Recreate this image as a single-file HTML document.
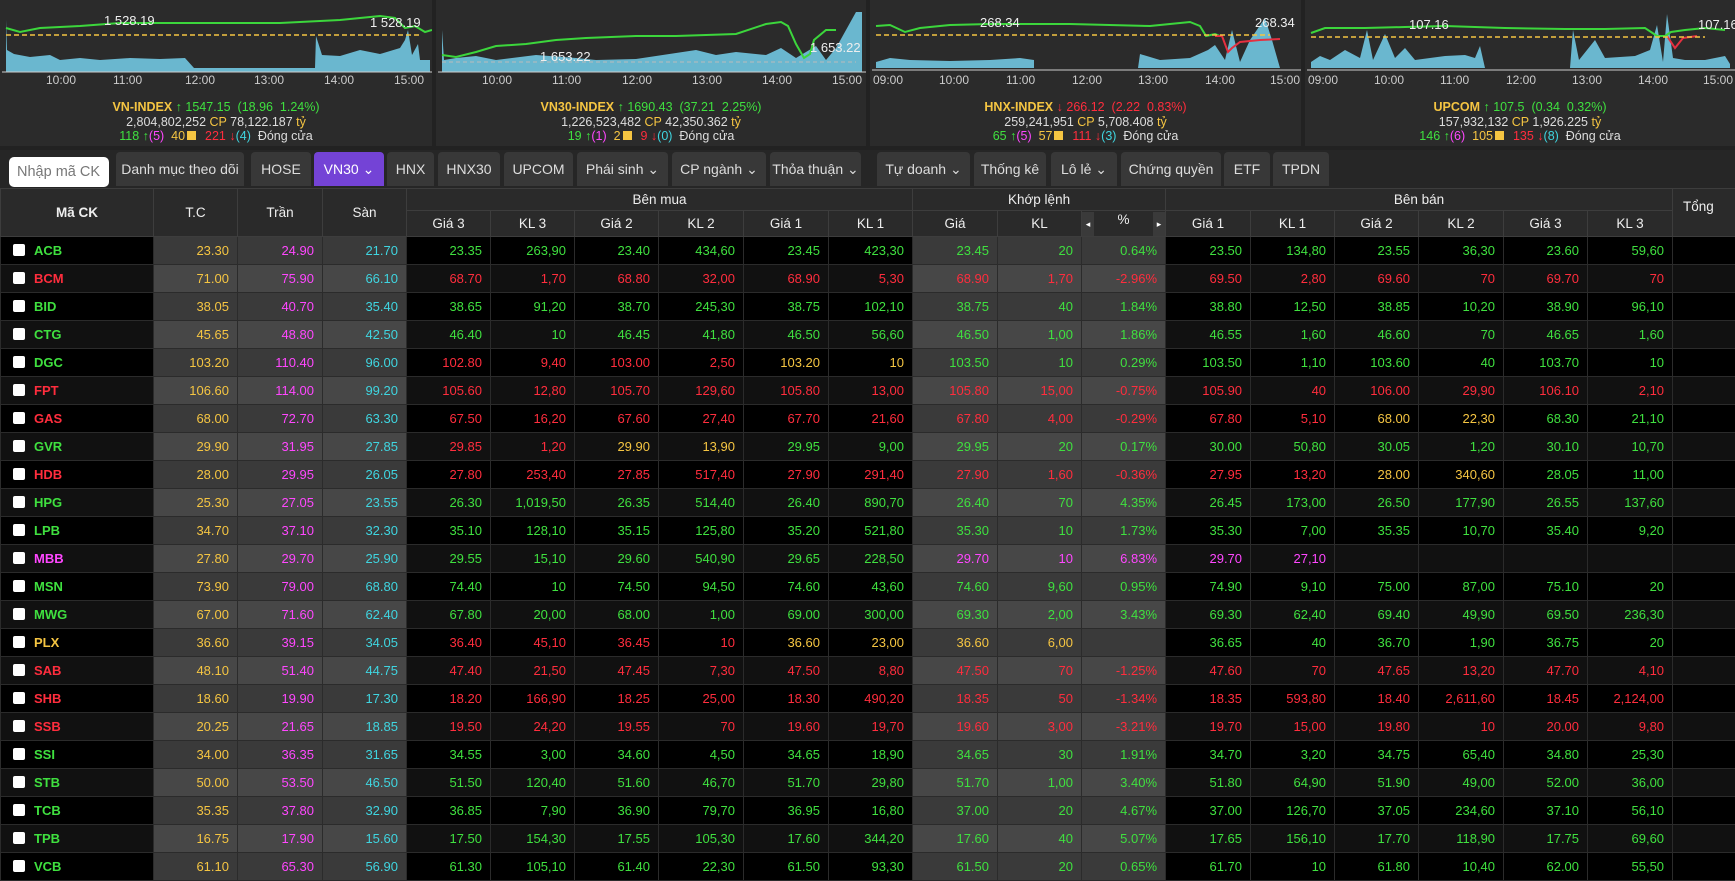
<!DOCTYPE html>
<html><head><meta charset="utf-8"><style>
*{box-sizing:border-box;margin:0;padding:0}
body{width:1735px;height:871px;overflow:hidden;background:#222;font-family:"Liberation Sans","Noto Sans CJK SC",sans-serif;color:#ddd;font-size:13px;position:relative}
.panel{position:absolute;top:0;height:146px;background:#2b2b2b}
.panel svg{position:absolute;left:0;top:0}
.info{position:absolute;top:100px;left:0;right:0;text-align:center;font-size:12.5px;line-height:14.5px;color:#ddd}
.g{color:#3fe03f}.r{color:#ff2d3d}.y{color:#f5c542}.p{color:#ff47ff}.c{color:#3fd5e0}.w{color:#e6e6e6}
.sq{display:inline-block;width:9px;height:9px;background:#f5c542;margin:0 2px}
.tb{position:absolute;top:150px;left:0;width:1735px;height:38px;background:#262626}
.btn{position:absolute;top:2px;height:34px;background:#383838;border-radius:4px 4px 0 0;color:#ddd;font-size:14px;line-height:34px;text-align:center}
.btn.act{background:#7443d6;color:#fff}
.inp{position:absolute;top:7px;left:9px;width:100px;height:30px;background:#fff;border-radius:5px;color:#777;font-size:14.5px;line-height:30px;padding-left:8px}
table{position:absolute;top:188px;left:0;border-collapse:collapse;table-layout:fixed;width:1800px}
th{background:#2a2a2a;color:#eee;font-weight:normal;font-size:13.5px;border:1px solid #3d3d3d;height:22px}
tr.h2 th{height:26px}
td{height:28px;text-align:right;padding-right:8px;border:1px solid #2b2b2b;font-size:13px}
tbody tr:nth-child(odd) td{background:#000}
tbody tr:nth-child(even) td{background:#111}
tbody tr:nth-child(odd) td.m{background:#3a3a3a}
tbody tr:nth-child(even) td.m{background:#474747}
td.s{text-align:left;padding-left:12px;font-weight:bold}
td.s i{display:inline-block;width:12px;height:12px;background:#fff;border-radius:2px;vertical-align:-1px;margin-right:9px}
.arr{display:inline-block;width:12px;height:24px;background:#3a3a3a;color:#fff;font-size:9px;line-height:24px;vertical-align:middle}
</style></head><body>

<div class="panel" style="left:0;width:432px">
<svg width="432" height="95">
<polygon fill="#6ab7cf" points="6,20 7,50 14,54 30,57 50,55 60,60 80,58 100,60 130,58 160,59 185,58 194,68 315,68 316,36 322,55 340,56 360,50 380,54 400,48 405,40 408,30 412,55 418,44 420,60 430,60 430,72 6,72"/>
<polyline fill="none" stroke="#3cd63c" stroke-width="2" points="6,28 20,32 40,28 80,26 120,23 200,23 280,23 340,20 380,16 395,18 405,28 415,26 425,32 432,30"/>
<line x1="6" y1="35" x2="420" y2="35" stroke="#f5c542" stroke-dasharray="5,3" stroke-width="1.5"/>
<line x1="2" y1="72" x2="432" y2="72" stroke="#ccc"/>
<text x="104" y="25" fill="#eee" font-size="13" font-family="Liberation Sans">1 528.19</text>
<text x="370" y="27" fill="#eee" font-size="13" font-family="Liberation Sans">1 528.19</text>
<g fill="#ccc" font-size="12" font-family="Liberation Sans"><text x="46" y="84">10:00</text><text x="113" y="84">11:00</text><text x="185" y="84">12:00</text><text x="254" y="84">13:00</text><text x="324" y="84">14:00</text><text x="394" y="84">15:00</text></g>
</svg>
<div class="info"><span class="y"><b>VN-INDEX</b></span> <span class="g">↑ 1547.15 &nbsp;(18.96 &nbsp;1.24%)</span><br>2,804,802,252 <span class="y">CP</span> 78,122.187 <span class="y">tỷ</span><br><span class="g">118 ↑</span><span class="p">(5)</span> &nbsp;<span class="y">40</span><span class="sq"></span> &nbsp;<span class="r">221 ↓</span><span class="c">(4)</span> &nbsp;Đóng cửa</div>
</div>

<div class="panel" style="left:436px;width:430px">
<svg width="430" height="95">
<polygon fill="#6ab7cf" points="6,30 8,60 20,58 40,56 60,60 100,55 140,58 160,60 200,59 220,56 260,50 280,55 300,52 330,55 345,48 360,58 380,46 390,60 400,48 420,12 426,12 426,72 6,72"/>
<polyline fill="none" stroke="#3cd63c" stroke-width="2" points="6,55 20,57 40,52 60,46 90,44 120,40 150,38 200,36 240,36 300,34 330,24 345,22 352,26 360,44 368,58 374,54 378,40 390,30 400,30"/>
<line x1="6" y1="62" x2="420" y2="62" stroke="#bbb" stroke-dasharray="4,3"/>
<line x1="2" y1="72" x2="430" y2="72" stroke="#ccc"/>
<text x="104" y="61" fill="#eee" font-size="13" font-family="Liberation Sans">1 653.22</text>
<text x="374" y="52" fill="#eee" font-size="13" font-family="Liberation Sans">1 653.22</text>
<g fill="#ccc" font-size="12" font-family="Liberation Sans"><text x="46" y="84">10:00</text><text x="116" y="84">11:00</text><text x="186" y="84">12:00</text><text x="256" y="84">13:00</text><text x="326" y="84">14:00</text><text x="396" y="84">15:00</text></g>
</svg>
<div class="info"><span class="y"><b>VN30-INDEX</b></span> <span class="g">↑ 1690.43 &nbsp;(37.21 &nbsp;2.25%)</span><br>1,226,523,482 <span class="y">CP</span> 42,350.362 <span class="y">tỷ</span><br><span class="g">19 ↑</span><span class="p">(1)</span> &nbsp;<span class="y">2</span><span class="sq"></span> &nbsp;<span class="r">9 ↓</span><span class="c">(0)</span> &nbsp;Đóng cửa</div>
</div>

<div class="panel" style="left:870px;width:431px">
<svg width="431" height="95">
<polygon fill="#6ab7cf" points="6,62 20,58 40,60 80,61 120,60 150,58 164,60 164,68 268,68 270,54 290,60 320,58 338,50 345,45 355,60 362,30 370,62 380,40 395,18 402,40 410,68 6,68"/>
<polyline fill="none" stroke="#3cd63c" stroke-width="2" points="6,26 20,25 35,32 50,28 80,25 120,24 200,24 280,26 300,24 320,22 330,26 336,36 345,34 350,36"/>
<polyline fill="none" stroke="#e53040" stroke-width="2" points="345,36 352,36 358,52 362,48 370,42 390,40 410,39"/>
<line x1="6" y1="35" x2="400" y2="35" stroke="#f5c542" stroke-dasharray="5,3" stroke-width="1.5"/>
<line x1="2" y1="70" x2="431" y2="70" stroke="#ccc"/>
<text x="110" y="27" fill="#eee" font-size="13" font-family="Liberation Sans">268.34</text>
<text x="385" y="27" fill="#eee" font-size="13" font-family="Liberation Sans">268.34</text>
<g fill="#ccc" font-size="12" font-family="Liberation Sans"><text x="3" y="84">09:00</text><text x="69" y="84">10:00</text><text x="136" y="84">11:00</text><text x="202" y="84">12:00</text><text x="268" y="84">13:00</text><text x="335" y="84">14:00</text><text x="400" y="84">15:00</text></g>
</svg>
<div class="info"><span class="y"><b>HNX-INDEX</b></span> <span class="r">↓ 266.12 &nbsp;(2.22 &nbsp;0.83%)</span><br>259,241,951 <span class="y">CP</span> 5,708.408 <span class="y">tỷ</span><br><span class="g">65 ↑</span><span class="p">(5)</span> &nbsp;<span class="y">57</span><span class="sq"></span> &nbsp;<span class="r">111 ↓</span><span class="c">(3)</span> &nbsp;Đóng cửa</div>
</div>

<div class="panel" style="left:1305px;width:430px">
<svg width="430" height="95">
<polygon fill="#6ab7cf" points="6,62 15,56 25,60 40,50 55,58 62,30 68,60 80,34 90,58 100,48 110,60 140,56 160,55 170,58 175,46 180,68 265,68 268,30 274,60 290,40 300,58 330,56 345,50 352,25 358,62 362,14 368,58 380,60 400,60 420,56 425,64 425,68 6,68"/>
<polyline fill="none" stroke="#3cd63c" stroke-width="2" points="6,33 20,28 60,28 100,27 140,26 200,28 260,29 300,29 340,28 352,36 360,36 366,32 380,30 400,28 420,30"/>
<polyline fill="none" stroke="#e53040" stroke-width="2" points="362,36 370,48 378,38 392,36"/>
<line x1="6" y1="37" x2="400" y2="37" stroke="#f5c542" stroke-dasharray="5,3" stroke-width="1.5"/>
<line x1="2" y1="70" x2="430" y2="70" stroke="#ccc"/>
<text x="104" y="29" fill="#eee" font-size="13" font-family="Liberation Sans">107.16</text>
<text x="393" y="29" fill="#eee" font-size="13" font-family="Liberation Sans">107.16</text>
<g fill="#ccc" font-size="12" font-family="Liberation Sans"><text x="3" y="84">09:00</text><text x="69" y="84">10:00</text><text x="135" y="84">11:00</text><text x="201" y="84">12:00</text><text x="267" y="84">13:00</text><text x="333" y="84">14:00</text><text x="398" y="84">15:00</text></g>
</svg>
<div class="info"><span class="y"><b>UPCOM</b></span> <span class="g">↑ 107.5 &nbsp;(0.34 &nbsp;0.32%)</span><br>157,932,132 <span class="y">CP</span> 1,926.225 <span class="y">tỷ</span><br><span class="g">146 ↑</span><span class="p">(6)</span> &nbsp;<span class="y">105</span><span class="sq"></span> &nbsp;<span class="r">135 ↓</span><span class="c">(8)</span> &nbsp;Đóng cửa</div>
</div>

<div class="tb">
<div class="inp">Nhập mã CK</div>
<div class="btn" style="left:116px;width:128px">Danh mục theo dõi</div>
<div class="btn" style="left:251px;width:60px">HOSE</div>
<div class="btn act" style="left:314px;width:70px">VN30 ⌄</div>
<div class="btn" style="left:387px;width:47px">HNX</div>
<div class="btn" style="left:438px;width:62px">HNX30</div>
<div class="btn" style="left:504px;width:69px">UPCOM</div>
<div class="btn" style="left:577px;width:91px">Phái sinh ⌄</div>
<div class="btn" style="left:672px;width:94px">CP ngành ⌄</div>
<div class="btn" style="left:770px;width:91px">Thỏa thuận ⌄</div>
<div class="btn" style="left:877px;width:93px">Tự doanh ⌄</div>
<div class="btn" style="left:974px;width:72px">Thống kê</div>
<div class="btn" style="left:1051px;width:66px">Lô lẻ ⌄</div>
<div class="btn" style="left:1121px;width:100px">Chứng quyền</div>
<div class="btn" style="left:1224px;width:46px">ETF</div>
<div class="btn" style="left:1273px;width:56px">TPDN</div>
</div>

<table>
<colgroup><col style="width:153px"><col style="width:84px"><col style="width:85px"><col style="width:84px"><col style="width:84px"><col style="width:84px"><col style="width:84px"><col style="width:85px"><col style="width:85px"><col style="width:84px"><col style="width:85px"><col style="width:84px"><col style="width:84px"><col style="width:85px"><col style="width:84px"><col style="width:84px"><col style="width:85px"><col style="width:84px"><col style="width:85px"><col style="width:128px"></colgroup>
<thead>
<tr><th rowspan="2"><b>Mã CK</b></th><th rowspan="2">T.C</th><th rowspan="2">Trần</th><th rowspan="2">Sàn</th><th colspan="6">Bên mua</th><th colspan="3">Khớp lệnh</th><th colspan="6">Bên bán</th><th rowspan="2" style="text-align:left;padding-left:10px;vertical-align:top;padding-top:10px">Tổng</th></tr>
<tr class="h2"><th>Giá 3</th><th>KL 3</th><th>Giá 2</th><th>KL 2</th><th>Giá 1</th><th>KL 1</th><th>Giá</th><th>KL</th><th style="padding:0"><span class="arr" style="float:left">◂</span>%<span class="arr" style="float:right">▸</span></th><th>Giá 1</th><th>KL 1</th><th>Giá 2</th><th>KL 2</th><th>Giá 3</th><th>KL 3</th></tr>
</thead>
<tbody>
<tr><td class="s g"><i></i>ACB</td><td class="m y">23.30</td><td class="m p">24.90</td><td class="m c">21.70</td><td class="g">23.35</td><td class="g">263,90</td><td class="g">23.40</td><td class="g">434,60</td><td class="g">23.45</td><td class="g">423,30</td><td class="m g">23.45</td><td class="m g">20</td><td class="m g">0.64%</td><td class="g">23.50</td><td class="g">134,80</td><td class="g">23.55</td><td class="g">36,30</td><td class="g">23.60</td><td class="g">59,60</td><td></td></tr>
<tr><td class="s r"><i></i>BCM</td><td class="m y">71.00</td><td class="m p">75.90</td><td class="m c">66.10</td><td class="r">68.70</td><td class="r">1,70</td><td class="r">68.80</td><td class="r">32,00</td><td class="r">68.90</td><td class="r">5,30</td><td class="m r">68.90</td><td class="m r">1,70</td><td class="m r">-2.96%</td><td class="r">69.50</td><td class="r">2,80</td><td class="r">69.60</td><td class="r">70</td><td class="r">69.70</td><td class="r">70</td><td></td></tr>
<tr><td class="s g"><i></i>BID</td><td class="m y">38.05</td><td class="m p">40.70</td><td class="m c">35.40</td><td class="g">38.65</td><td class="g">91,20</td><td class="g">38.70</td><td class="g">245,30</td><td class="g">38.75</td><td class="g">102,10</td><td class="m g">38.75</td><td class="m g">40</td><td class="m g">1.84%</td><td class="g">38.80</td><td class="g">12,50</td><td class="g">38.85</td><td class="g">10,20</td><td class="g">38.90</td><td class="g">96,10</td><td></td></tr>
<tr><td class="s g"><i></i>CTG</td><td class="m y">45.65</td><td class="m p">48.80</td><td class="m c">42.50</td><td class="g">46.40</td><td class="g">10</td><td class="g">46.45</td><td class="g">41,80</td><td class="g">46.50</td><td class="g">56,60</td><td class="m g">46.50</td><td class="m g">1,00</td><td class="m g">1.86%</td><td class="g">46.55</td><td class="g">1,60</td><td class="g">46.60</td><td class="g">70</td><td class="g">46.65</td><td class="g">1,60</td><td></td></tr>
<tr><td class="s g"><i></i>DGC</td><td class="m y">103.20</td><td class="m p">110.40</td><td class="m c">96.00</td><td class="r">102.80</td><td class="r">9,40</td><td class="r">103.00</td><td class="r">2,50</td><td class="y">103.20</td><td class="y">10</td><td class="m g">103.50</td><td class="m g">10</td><td class="m g">0.29%</td><td class="g">103.50</td><td class="g">1,10</td><td class="g">103.60</td><td class="g">40</td><td class="g">103.70</td><td class="g">10</td><td></td></tr>
<tr><td class="s r"><i></i>FPT</td><td class="m y">106.60</td><td class="m p">114.00</td><td class="m c">99.20</td><td class="r">105.60</td><td class="r">12,80</td><td class="r">105.70</td><td class="r">129,60</td><td class="r">105.80</td><td class="r">13,00</td><td class="m r">105.80</td><td class="m r">15,00</td><td class="m r">-0.75%</td><td class="r">105.90</td><td class="r">40</td><td class="r">106.00</td><td class="r">29,90</td><td class="r">106.10</td><td class="r">2,10</td><td></td></tr>
<tr><td class="s r"><i></i>GAS</td><td class="m y">68.00</td><td class="m p">72.70</td><td class="m c">63.30</td><td class="r">67.50</td><td class="r">16,20</td><td class="r">67.60</td><td class="r">27,40</td><td class="r">67.70</td><td class="r">21,60</td><td class="m r">67.80</td><td class="m r">4,00</td><td class="m r">-0.29%</td><td class="r">67.80</td><td class="r">5,10</td><td class="y">68.00</td><td class="y">22,30</td><td class="g">68.30</td><td class="g">21,10</td><td></td></tr>
<tr><td class="s g"><i></i>GVR</td><td class="m y">29.90</td><td class="m p">31.95</td><td class="m c">27.85</td><td class="r">29.85</td><td class="r">1,20</td><td class="y">29.90</td><td class="y">13,90</td><td class="g">29.95</td><td class="g">9,00</td><td class="m g">29.95</td><td class="m g">20</td><td class="m g">0.17%</td><td class="g">30.00</td><td class="g">50,80</td><td class="g">30.05</td><td class="g">1,20</td><td class="g">30.10</td><td class="g">10,70</td><td></td></tr>
<tr><td class="s r"><i></i>HDB</td><td class="m y">28.00</td><td class="m p">29.95</td><td class="m c">26.05</td><td class="r">27.80</td><td class="r">253,40</td><td class="r">27.85</td><td class="r">517,40</td><td class="r">27.90</td><td class="r">291,40</td><td class="m r">27.90</td><td class="m r">1,60</td><td class="m r">-0.36%</td><td class="r">27.95</td><td class="r">13,20</td><td class="y">28.00</td><td class="y">340,60</td><td class="g">28.05</td><td class="g">11,00</td><td></td></tr>
<tr><td class="s g"><i></i>HPG</td><td class="m y">25.30</td><td class="m p">27.05</td><td class="m c">23.55</td><td class="g">26.30</td><td class="g">1,019,50</td><td class="g">26.35</td><td class="g">514,40</td><td class="g">26.40</td><td class="g">890,70</td><td class="m g">26.40</td><td class="m g">70</td><td class="m g">4.35%</td><td class="g">26.45</td><td class="g">173,00</td><td class="g">26.50</td><td class="g">177,90</td><td class="g">26.55</td><td class="g">137,60</td><td></td></tr>
<tr><td class="s g"><i></i>LPB</td><td class="m y">34.70</td><td class="m p">37.10</td><td class="m c">32.30</td><td class="g">35.10</td><td class="g">128,10</td><td class="g">35.15</td><td class="g">125,80</td><td class="g">35.20</td><td class="g">521,80</td><td class="m g">35.30</td><td class="m g">10</td><td class="m g">1.73%</td><td class="g">35.30</td><td class="g">7,00</td><td class="g">35.35</td><td class="g">10,70</td><td class="g">35.40</td><td class="g">9,20</td><td></td></tr>
<tr><td class="s p"><i></i>MBB</td><td class="m y">27.80</td><td class="m p">29.70</td><td class="m c">25.90</td><td class="g">29.55</td><td class="g">15,10</td><td class="g">29.60</td><td class="g">540,90</td><td class="g">29.65</td><td class="g">228,50</td><td class="m p">29.70</td><td class="m p">10</td><td class="m p">6.83%</td><td class="p">29.70</td><td class="p">27,10</td><td></td><td></td><td></td><td></td><td></td></tr>
<tr><td class="s g"><i></i>MSN</td><td class="m y">73.90</td><td class="m p">79.00</td><td class="m c">68.80</td><td class="g">74.40</td><td class="g">10</td><td class="g">74.50</td><td class="g">94,50</td><td class="g">74.60</td><td class="g">43,60</td><td class="m g">74.60</td><td class="m g">9,60</td><td class="m g">0.95%</td><td class="g">74.90</td><td class="g">9,10</td><td class="g">75.00</td><td class="g">87,00</td><td class="g">75.10</td><td class="g">20</td><td></td></tr>
<tr><td class="s g"><i></i>MWG</td><td class="m y">67.00</td><td class="m p">71.60</td><td class="m c">62.40</td><td class="g">67.80</td><td class="g">20,00</td><td class="g">68.00</td><td class="g">1,00</td><td class="g">69.00</td><td class="g">300,00</td><td class="m g">69.30</td><td class="m g">2,00</td><td class="m g">3.43%</td><td class="g">69.30</td><td class="g">62,40</td><td class="g">69.40</td><td class="g">49,90</td><td class="g">69.50</td><td class="g">236,30</td><td></td></tr>
<tr><td class="s y"><i></i>PLX</td><td class="m y">36.60</td><td class="m p">39.15</td><td class="m c">34.05</td><td class="r">36.40</td><td class="r">45,10</td><td class="r">36.45</td><td class="r">10</td><td class="y">36.60</td><td class="y">23,00</td><td class="m y">36.60</td><td class="m y">6,00</td><td class="m"></td><td class="g">36.65</td><td class="g">40</td><td class="g">36.70</td><td class="g">1,90</td><td class="g">36.75</td><td class="g">20</td><td></td></tr>
<tr><td class="s r"><i></i>SAB</td><td class="m y">48.10</td><td class="m p">51.40</td><td class="m c">44.75</td><td class="r">47.40</td><td class="r">21,50</td><td class="r">47.45</td><td class="r">7,30</td><td class="r">47.50</td><td class="r">8,80</td><td class="m r">47.50</td><td class="m r">70</td><td class="m r">-1.25%</td><td class="r">47.60</td><td class="r">70</td><td class="r">47.65</td><td class="r">13,20</td><td class="r">47.70</td><td class="r">4,10</td><td></td></tr>
<tr><td class="s r"><i></i>SHB</td><td class="m y">18.60</td><td class="m p">19.90</td><td class="m c">17.30</td><td class="r">18.20</td><td class="r">166,90</td><td class="r">18.25</td><td class="r">25,00</td><td class="r">18.30</td><td class="r">490,20</td><td class="m r">18.35</td><td class="m r">50</td><td class="m r">-1.34%</td><td class="r">18.35</td><td class="r">593,80</td><td class="r">18.40</td><td class="r">2,611,60</td><td class="r">18.45</td><td class="r">2,124,00</td><td></td></tr>
<tr><td class="s r"><i></i>SSB</td><td class="m y">20.25</td><td class="m p">21.65</td><td class="m c">18.85</td><td class="r">19.50</td><td class="r">24,20</td><td class="r">19.55</td><td class="r">70</td><td class="r">19.60</td><td class="r">19,70</td><td class="m r">19.60</td><td class="m r">3,00</td><td class="m r">-3.21%</td><td class="r">19.70</td><td class="r">15,00</td><td class="r">19.80</td><td class="r">10</td><td class="r">20.00</td><td class="r">9,80</td><td></td></tr>
<tr><td class="s g"><i></i>SSI</td><td class="m y">34.00</td><td class="m p">36.35</td><td class="m c">31.65</td><td class="g">34.55</td><td class="g">3,00</td><td class="g">34.60</td><td class="g">4,50</td><td class="g">34.65</td><td class="g">18,90</td><td class="m g">34.65</td><td class="m g">30</td><td class="m g">1.91%</td><td class="g">34.70</td><td class="g">3,20</td><td class="g">34.75</td><td class="g">65,40</td><td class="g">34.80</td><td class="g">25,30</td><td></td></tr>
<tr><td class="s g"><i></i>STB</td><td class="m y">50.00</td><td class="m p">53.50</td><td class="m c">46.50</td><td class="g">51.50</td><td class="g">120,40</td><td class="g">51.60</td><td class="g">46,70</td><td class="g">51.70</td><td class="g">29,80</td><td class="m g">51.70</td><td class="m g">1,00</td><td class="m g">3.40%</td><td class="g">51.80</td><td class="g">64,90</td><td class="g">51.90</td><td class="g">49,00</td><td class="g">52.00</td><td class="g">36,00</td><td></td></tr>
<tr><td class="s g"><i></i>TCB</td><td class="m y">35.35</td><td class="m p">37.80</td><td class="m c">32.90</td><td class="g">36.85</td><td class="g">7,90</td><td class="g">36.90</td><td class="g">79,70</td><td class="g">36.95</td><td class="g">16,80</td><td class="m g">37.00</td><td class="m g">20</td><td class="m g">4.67%</td><td class="g">37.00</td><td class="g">126,70</td><td class="g">37.05</td><td class="g">234,60</td><td class="g">37.10</td><td class="g">56,10</td><td></td></tr>
<tr><td class="s g"><i></i>TPB</td><td class="m y">16.75</td><td class="m p">17.90</td><td class="m c">15.60</td><td class="g">17.50</td><td class="g">154,30</td><td class="g">17.55</td><td class="g">105,30</td><td class="g">17.60</td><td class="g">344,20</td><td class="m g">17.60</td><td class="m g">40</td><td class="m g">5.07%</td><td class="g">17.65</td><td class="g">156,10</td><td class="g">17.70</td><td class="g">118,90</td><td class="g">17.75</td><td class="g">69,60</td><td></td></tr>
<tr><td class="s g"><i></i>VCB</td><td class="m y">61.10</td><td class="m p">65.30</td><td class="m c">56.90</td><td class="g">61.30</td><td class="g">105,10</td><td class="g">61.40</td><td class="g">22,30</td><td class="g">61.50</td><td class="g">93,30</td><td class="m g">61.50</td><td class="m g">20</td><td class="m g">0.65%</td><td class="g">61.70</td><td class="g">10</td><td class="g">61.80</td><td class="g">10,40</td><td class="g">62.00</td><td class="g">55,50</td><td></td></tr>
</tbody></table>
</body></html>
